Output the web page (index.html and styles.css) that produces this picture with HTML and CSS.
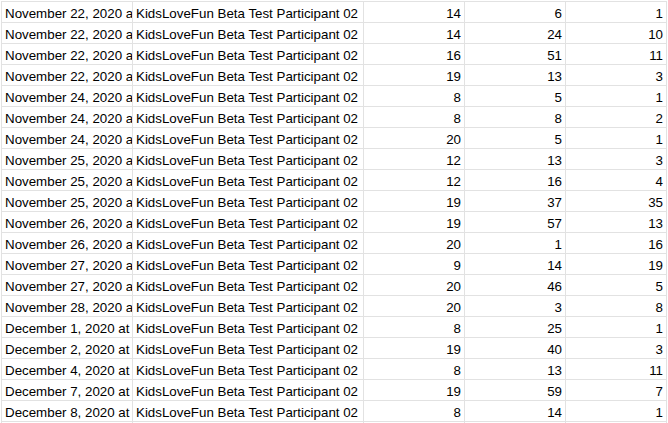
FILE: index.html
```html
<!DOCTYPE html>
<html lang="en">
<head>
  <meta charset="UTF-8">
  <title>Sheet</title>
  <link rel="stylesheet" href="styles.css">
</head>
<body>
  <div class="sheet">
    <div class="cell">November 22, 2020 at</div><div class="cell">KidsLoveFun Beta Test Participant 02</div><div class="cell num">14</div><div class="cell num">6</div><div class="cell num">1</div>
    <div class="cell">November 22, 2020 at</div><div class="cell">KidsLoveFun Beta Test Participant 02</div><div class="cell num">14</div><div class="cell num">24</div><div class="cell num">10</div>
    <div class="cell">November 22, 2020 at</div><div class="cell">KidsLoveFun Beta Test Participant 02</div><div class="cell num">16</div><div class="cell num">51</div><div class="cell num">11</div>
    <div class="cell">November 22, 2020 at</div><div class="cell">KidsLoveFun Beta Test Participant 02</div><div class="cell num">19</div><div class="cell num">13</div><div class="cell num">3</div>
    <div class="cell">November 24, 2020 at</div><div class="cell">KidsLoveFun Beta Test Participant 02</div><div class="cell num">8</div><div class="cell num">5</div><div class="cell num">1</div>
    <div class="cell">November 24, 2020 at</div><div class="cell">KidsLoveFun Beta Test Participant 02</div><div class="cell num">8</div><div class="cell num">8</div><div class="cell num">2</div>
    <div class="cell">November 24, 2020 at</div><div class="cell">KidsLoveFun Beta Test Participant 02</div><div class="cell num">20</div><div class="cell num">5</div><div class="cell num">1</div>
    <div class="cell">November 25, 2020 at</div><div class="cell">KidsLoveFun Beta Test Participant 02</div><div class="cell num">12</div><div class="cell num">13</div><div class="cell num">3</div>
    <div class="cell">November 25, 2020 at</div><div class="cell">KidsLoveFun Beta Test Participant 02</div><div class="cell num">12</div><div class="cell num">16</div><div class="cell num">4</div>
    <div class="cell">November 25, 2020 at</div><div class="cell">KidsLoveFun Beta Test Participant 02</div><div class="cell num">19</div><div class="cell num">37</div><div class="cell num">35</div>
    <div class="cell">November 26, 2020 at</div><div class="cell">KidsLoveFun Beta Test Participant 02</div><div class="cell num">19</div><div class="cell num">57</div><div class="cell num">13</div>
    <div class="cell">November 26, 2020 at</div><div class="cell">KidsLoveFun Beta Test Participant 02</div><div class="cell num">20</div><div class="cell num">1</div><div class="cell num">16</div>
    <div class="cell">November 27, 2020 at</div><div class="cell">KidsLoveFun Beta Test Participant 02</div><div class="cell num">9</div><div class="cell num">14</div><div class="cell num">19</div>
    <div class="cell">November 27, 2020 at</div><div class="cell">KidsLoveFun Beta Test Participant 02</div><div class="cell num">20</div><div class="cell num">46</div><div class="cell num">5</div>
    <div class="cell">November 28, 2020 at</div><div class="cell">KidsLoveFun Beta Test Participant 02</div><div class="cell num">20</div><div class="cell num">3</div><div class="cell num">8</div>
    <div class="cell">December 1, 2020 at</div><div class="cell">KidsLoveFun Beta Test Participant 02</div><div class="cell num">8</div><div class="cell num">25</div><div class="cell num">1</div>
    <div class="cell">December 2, 2020 at</div><div class="cell">KidsLoveFun Beta Test Participant 02</div><div class="cell num">19</div><div class="cell num">40</div><div class="cell num">3</div>
    <div class="cell">December 4, 2020 at</div><div class="cell">KidsLoveFun Beta Test Participant 02</div><div class="cell num">8</div><div class="cell num">13</div><div class="cell num">11</div>
    <div class="cell">December 7, 2020 at</div><div class="cell">KidsLoveFun Beta Test Participant 02</div><div class="cell num">19</div><div class="cell num">59</div><div class="cell num">7</div>
    <div class="cell">December 8, 2020 at</div><div class="cell">KidsLoveFun Beta Test Participant 02</div><div class="cell num">8</div><div class="cell num">14</div><div class="cell num">1</div>
    <div class="cell"></div><div class="cell"></div><div class="cell num"></div><div class="cell num"></div><div class="cell num"></div>
  </div>
</body>
</html>
```

FILE: styles.css
```css
html, body {
  margin: 0;
  background: #fff;
  overflow: hidden;
}

body {
  padding: 1px 0 0 1px;
  font-family: "Liberation Sans", Arial, sans-serif;
  font-size: 13.33px;
  color: #000;
}

.sheet {
  display: grid;
  grid-template-columns: 131px 231px 101px 101px 101px;
  grid-auto-rows: 21px;
  width: max-content;
  border-left: 1px solid #e2e2e2;
  border-top: 1px solid #e2e2e2;
}

.cell {
  box-sizing: border-box;
  border-right: 1px solid #e2e2e2;
  border-bottom: 1px solid #e2e2e2;
  padding: 4px 3px 0 3px;
  line-height: 16px;
  white-space: nowrap;
  overflow: hidden;
}

.num {
  text-align: right;
}
```
